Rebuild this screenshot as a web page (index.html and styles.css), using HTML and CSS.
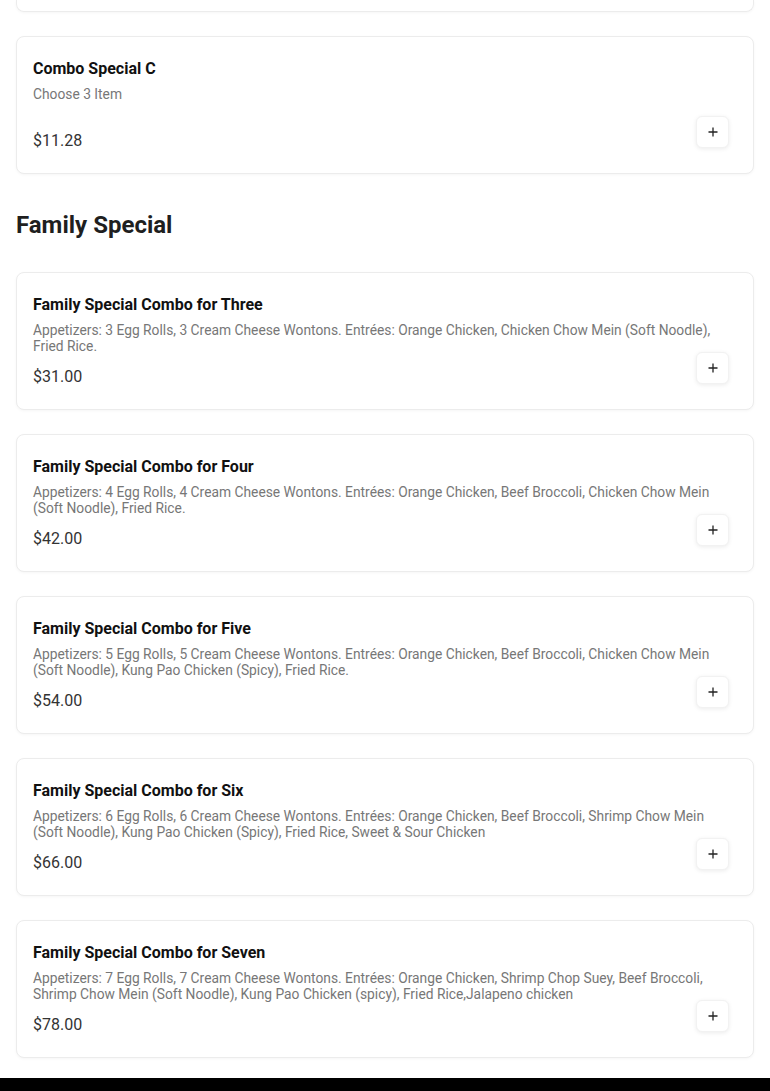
FILE: index.html
```html
<!DOCTYPE html>
<html>
<head>
<meta charset="utf-8">
<link rel="stylesheet" href="styles.css">
</head>
<body>
<div class="page">
  <div class="card-stub"></div>
  <div class="card">
    <div class="card-title">Combo Special C</div>
    <div class="card-desc">Choose 3 Item</div>
    <div class="card-row">
      <div class="price">$11.28</div>
      <button class="add-btn"><svg width="12" height="12" viewBox="0 0 12 12"><path d="M6 1.5v9M1.5 6h9" stroke="#222" stroke-width="1.3"/></svg></button>
    </div>
  </div>

  <h2 class="section-title">Family Special</h2>

  <div class="card">
    <div class="card-title">Family Special Combo for Three</div>
    <div class="card-desc">Appetizers: 3 Egg Rolls, 3 Cream Cheese Wontons. Entrées: Orange Chicken, Chicken Chow Mein (Soft Noodle), Fried Rice.</div>
    <div class="card-row">
      <div class="price">$31.00</div>
      <button class="add-btn"><svg width="12" height="12" viewBox="0 0 12 12"><path d="M6 1.5v9M1.5 6h9" stroke="#222" stroke-width="1.3"/></svg></button>
    </div>
  </div>

  <div class="card">
    <div class="card-title">Family Special Combo for Four</div>
    <div class="card-desc">Appetizers: 4 Egg Rolls, 4 Cream Cheese Wontons. Entrées: Orange Chicken, Beef Broccoli, Chicken Chow Mein (Soft Noodle), Fried Rice.</div>
    <div class="card-row">
      <div class="price">$42.00</div>
      <button class="add-btn"><svg width="12" height="12" viewBox="0 0 12 12"><path d="M6 1.5v9M1.5 6h9" stroke="#222" stroke-width="1.3"/></svg></button>
    </div>
  </div>

  <div class="card">
    <div class="card-title">Family Special Combo for Five</div>
    <div class="card-desc">Appetizers: 5 Egg Rolls, 5 Cream Cheese Wontons. Entrées: Orange Chicken, Beef Broccoli, Chicken Chow Mein (Soft Noodle), Kung Pao Chicken (Spicy), Fried Rice.</div>
    <div class="card-row">
      <div class="price">$54.00</div>
      <button class="add-btn"><svg width="12" height="12" viewBox="0 0 12 12"><path d="M6 1.5v9M1.5 6h9" stroke="#222" stroke-width="1.3"/></svg></button>
    </div>
  </div>

  <div class="card">
    <div class="card-title">Family Special Combo for Six</div>
    <div class="card-desc">Appetizers: 6 Egg Rolls, 6 Cream Cheese Wontons. Entrées: Orange Chicken, Beef Broccoli, Shrimp Chow Mein (Soft Noodle), Kung Pao Chicken (Spicy), Fried Rice, Sweet &amp; Sour Chicken</div>
    <div class="card-row">
      <div class="price">$66.00</div>
      <button class="add-btn"><svg width="12" height="12" viewBox="0 0 12 12"><path d="M6 1.5v9M1.5 6h9" stroke="#222" stroke-width="1.3"/></svg></button>
    </div>
  </div>

  <div class="card">
    <div class="card-title">Family Special Combo for Seven</div>
    <div class="card-desc">Appetizers: 7 Egg Rolls, 7 Cream Cheese Wontons. Entrées: Orange Chicken, Shrimp Chop Suey, Beef Broccoli, Shrimp Chow Mein (Soft Noodle), Kung Pao Chicken (spicy), Fried Rice,Jalapeno chicken</div>
    <div class="card-row">
      <div class="price">$78.00</div>
      <button class="add-btn"><svg width="12" height="12" viewBox="0 0 12 12"><path d="M6 1.5v9M1.5 6h9" stroke="#222" stroke-width="1.3"/></svg></button>
    </div>
  </div>
</div>
<div class="footer-bar"></div>
</body>
</html>
```
FILE: styles.css
```css
html, body {
  margin: 0;
  padding: 0;
  background: #fff;
  font-family: Roboto, "Liberation Sans", Arial, sans-serif;
  color: #1a1a1a;
}

.page {
  padding: 0 16px 20px;
  display: flex;
  flex-direction: column;
  gap: 24px;
}

.card-stub {
  height: 11px;
  border: 1px solid #ececec;
  border-top: none;
  border-radius: 0 0 8px 8px;
  box-shadow: 0 1px 3px rgba(0,0,0,0.04);
}

.card {
  border: 1px solid #ececec;
  border-radius: 8px;
  background: #fff;
  padding: 22px 16px 20px 16px;
  box-shadow: 0 1px 3px rgba(0,0,0,0.04);
}

.card-title {
  font-size: 16px;
  font-weight: 700;
  line-height: 20px;
  color: #111;
}

.card-desc {
  margin-top: 7px;
  font-size: 13.8px;
  line-height: 16px;
  color: #777;
  min-height: 32px;
}

.card-row {
  margin-top: 11px;
  display: flex;
  justify-content: space-between;
  align-items: flex-end;
}

.price {
  font-size: 16px;
  line-height: 24px;
  color: #333;
}

.add-btn {
  width: 33px;
  height: 32px;
  margin: -13px 8px 5px 0;
  padding: 0;
  border: 1px solid #f2f2f2;
  border-radius: 6px;
  background: #fff;
  box-shadow: 0 1px 4px rgba(0,0,0,0.08);
  display: flex;
  align-items: center;
  justify-content: center;
}

.section-title {
  margin: 11px 0 7px;
  font-size: 24px;
  line-height: 32px;
  font-weight: 700;
  color: #1f1f1f;
}

.footer-bar {
  height: 14px;
  background: #000;
}
```
